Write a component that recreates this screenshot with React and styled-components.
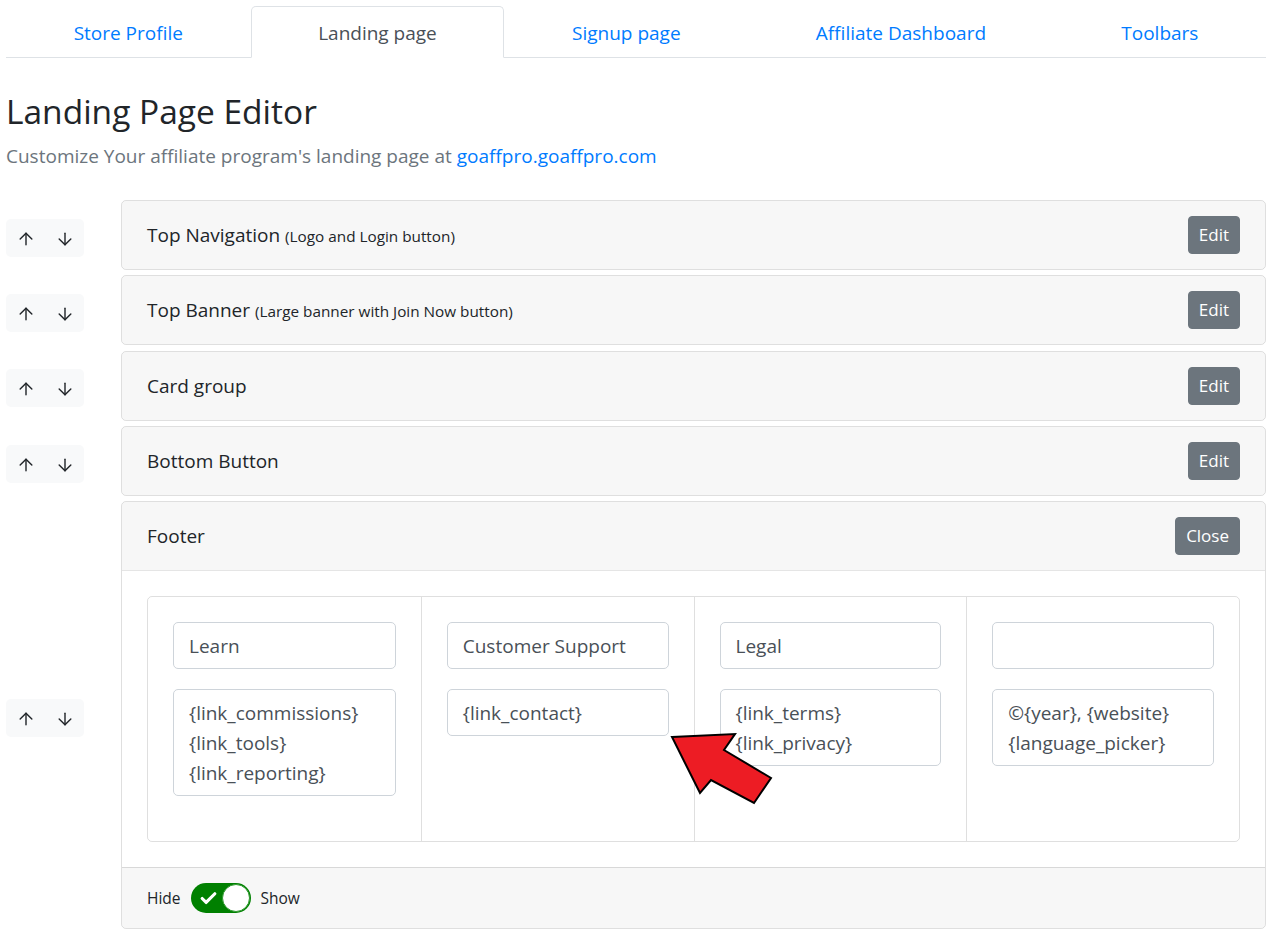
import React from "react"
import styled, { createGlobalStyle } from "styled-components"
import { ArrowUp, ArrowDown, Check } from "lucide-react"

const GlobalStyle = createGlobalStyle`
  *, *::before, *::after {
    box-sizing: border-box;
  }
  body {
    margin: 0;
    background: #fff;
    color: #212529;
    font-family: "Open Sans", "Noto Sans", sans-serif;
    font-size: 19px;
    line-height: 30px;
  }
`

const Page = styled.div`
  padding: 6px 6px 20px;
`

const Tabs = styled.nav`
  display: flex;
  border-bottom: 1px solid #dee2e6;
`

const Tab = styled.a`
  flex: 1 1 auto;
  text-align: center;
  padding: 11px 20px 9px;
  margin-bottom: -1px;
  border: 1px solid ${(p) => (p.$active ? "#dee2e6" : "transparent")};
  border-bottom-color: ${(p) => (p.$active ? "#fff" : "transparent")};
  border-radius: 5px 5px 0 0;
  background: ${(p) => (p.$active ? "#fff" : "transparent")};
  color: ${(p) => (p.$active ? "#495057" : "#007bff")};
  text-decoration: none;
  cursor: pointer;
`

const Heading = styled.h1`
  margin: 33px 0 10px;
  font-size: 33.5px;
  line-height: 40px;
  font-weight: 400;
`

const Lead = styled.p`
  margin: 0 0 29px;
  color: #6c757d;
`

const Link = styled.a`
  color: #007bff;
  text-decoration: none;
`

const Row = styled.div`
  display: grid;
  grid-template-columns: 115px 1fr;
  align-items: center;
`

const MoveGroup = styled.div`
  display: inline-flex;
  width: 78px;
  height: 38px;
  background: #f8f9fa;
  border-radius: 5px;
`

const MoveButton = styled.button`
  flex: 1;
  display: flex;
  align-items: center;
  justify-content: center;
  padding: 2px 0 0;
  border: 0;
  background: transparent;
  color: #212529;
  cursor: pointer;
`

const Card = styled.div`
  margin-bottom: 5.3px;
  border: 1px solid rgba(0, 0, 0, 0.125);
  border-radius: 5px;
  overflow: hidden;
`

const CardHeader = styled.div`
  display: flex;
  align-items: center;
  justify-content: space-between;
  padding: 15px 25px;
  background: rgba(0, 0, 0, 0.03);
  border-bottom: ${(p) => (p.$open ? "1px solid rgba(0, 0, 0, 0.07)" : "0")};
`

const Title = styled.span`
  font-size: 19px;
`

const Note = styled.small`
  font-size: 15.3px;
`

const Button = styled.button`
  font-family: inherit;
  font-size: 17px;
  line-height: 26px;
  padding: 5px 10px;
  border: 1px solid #6c757d;
  border-radius: 4px;
  background: #6c757d;
  color: #fff;
  cursor: pointer;
`

const CardBody = styled.div`
  padding: 25px;
`

const ColumnGrid = styled.div`
  position: relative;
  display: grid;
  grid-template-columns: repeat(4, 1fr);
  border: 1px solid rgba(0, 0, 0, 0.125);
  border-radius: 5px;
`

const Column = styled.div`
  padding: 25px;
  border-left: 1px solid rgba(0, 0, 0, 0.125);

  &:first-child {
    border-left: 0;
  }
`

const Field = styled.textarea`
  display: block;
  width: 100%;
  height: ${(p) => p.$rows * 30 + 17}px;
  margin: 0 0 20px;
  padding: 7.5px 15px;
  font-family: inherit;
  font-size: 19px;
  line-height: 30px;
  color: #495057;
  border: 1px solid #ced4da;
  border-radius: 5px;
  background: #fff;
  resize: none;
  overflow: hidden;
  white-space: pre;
`

const CardFooter = styled.div`
  display: flex;
  align-items: center;
  gap: 10px;
  padding: 15px 25px;
  background: rgba(0, 0, 0, 0.03);
  border-top: 1px solid rgba(0, 0, 0, 0.125);
  font-size: 15.5px;
`

const Switch = styled.span`
  position: relative;
  display: inline-flex;
  align-items: center;
  width: 60px;
  height: 30px;
  padding-left: 8px;
  border-radius: 15px;
  background: ${(p) => (p.$on ? "#008000" : "#ccc")};
  color: #fff;
`

const Knob = styled.span`
  position: absolute;
  top: 1px;
  right: 1px;
  width: 28px;
  height: 28px;
  border-radius: 50%;
  background: #fff;
  border: 1px solid #2f9a2f;
`

const Callout = styled.svg`
  position: absolute;
  left: 520px;
  top: 132px;
  overflow: visible;
  pointer-events: none;
`

const sections = [
  { title: "Top Navigation", note: "(Logo and Login button)" },
  { title: "Top Banner", note: "(Large banner with Join Now button)" },
  { title: "Card group" },
  { title: "Bottom Button" },
]

const footerColumns = [
  { heading: "Learn", links: "{link_commissions}\n{link_tools}\n{link_reporting}" },
  { heading: "Customer Support", links: "{link_contact}" },
  { heading: "Legal", links: "{link_terms}\n{link_privacy}" },
  { heading: "", links: "©{year}, {website}\n{language_picker}" },
]

const tabs = ["Store Profile", "Landing page", "Signup page", "Affiliate Dashboard", "Toolbars"]

const Mover = () => (
  <MoveGroup>
    <MoveButton aria-label="Move up">
      <ArrowUp size={20} strokeWidth={1.7} />
    </MoveButton>
    <MoveButton aria-label="Move down">
      <ArrowDown size={20} strokeWidth={1.7} />
    </MoveButton>
  </MoveGroup>
)

const App = () => (
  <Page>
    <GlobalStyle />
    <Tabs>
      {tabs.map((t) => (
        <Tab key={t} $active={t === "Landing page"}>
          {t}
        </Tab>
      ))}
    </Tabs>

    <Heading>Landing Page Editor</Heading>
    <Lead>
      Customize Your affiliate program's landing page at{" "}
      <Link href="#">goaffpro.goaffpro.com</Link>
    </Lead>

    {sections.map((s) => (
      <Row key={s.title}>
        <Mover />
        <Card>
          <CardHeader>
            <Title>
              {s.title} {s.note && <Note>{s.note}</Note>}
            </Title>
            <Button>Edit</Button>
          </CardHeader>
        </Card>
      </Row>
    ))}

    <Row>
      <Mover />
      <Card>
        <CardHeader $open>
          <Title>Footer</Title>
          <Button>Close</Button>
        </CardHeader>
        <CardBody>
          <ColumnGrid>
            {footerColumns.map((c, i) => (
              <Column key={i}>
                <Field $rows={1} defaultValue={c.heading} readOnly />
                <Field
                  $rows={c.links.split("\n").length}
                  defaultValue={c.links}
                  readOnly
                />
              </Column>
            ))}
            <Callout width="110" height="80" viewBox="0 0 110 80">
              <polygon
                points="4,8 67,5 56,21 103,49 86,74 43,51 32,64"
                fill="#ed1c24"
                stroke="#000"
                strokeWidth="2"
                strokeLinejoin="miter"
              />
            </Callout>
          </ColumnGrid>
        </CardBody>
        <CardFooter>
          Hide
          <Switch $on>
            <Check size={19} strokeWidth={4} />
            <Knob />
          </Switch>
          Show
        </CardFooter>
      </Card>
    </Row>
  </Page>
)

export default App
